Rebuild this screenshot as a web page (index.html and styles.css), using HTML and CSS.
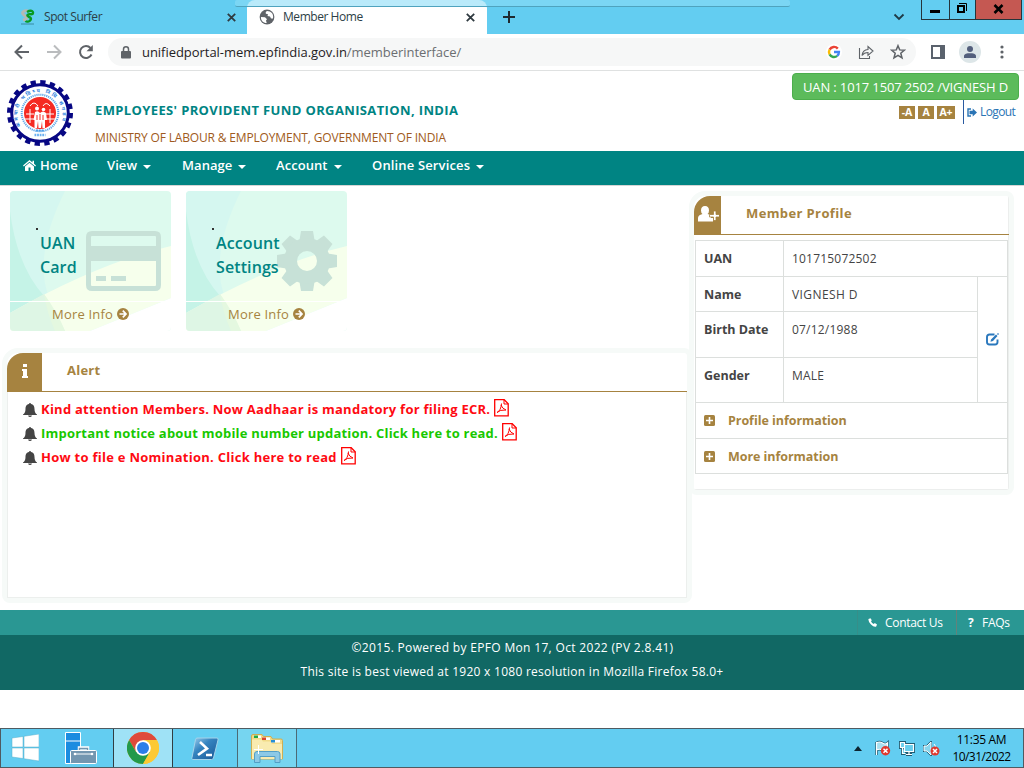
FILE: index.html
```html
<!DOCTYPE html>
<html lang="en">
<head>
<meta charset="utf-8">
<title>Member Home</title>
<link rel="stylesheet" href="styles.css">
</head>
<body>
<div class="tabs">
  <div class="snap-bar"></div>
  <div class="tab">
    <svg class="fav" width="16" height="16" viewBox="0 0 16 16"><path d="M8 2C3 1 1 4 4 6s4 4-1 5" fill="none" stroke="#b4b9b4" stroke-width="3"/><path d="M7 3c5-3 7 0 5.500 2-2 1-4-1-5 1s5 2 3 5c-1 2-4 2-5 1" fill="none" stroke="#079a20" stroke-width="2.400"/><path d="M1 15h13" stroke="#398ba3"/></svg>
    <span class="t-spot">Spot Surfer</span>
    <svg class="x" width="9" height="9" viewBox="0 0 9 9"><path d="M.8.8l7.4 7.4M8.2.8L.8 8.2"/></svg>
  </div>
  <div class="tab active">
    <svg class="fav" width="16" height="16" viewBox="0 0 16 16"><circle cx="8" cy="8" r="7.4" fill="#5f6368"/><path d="M2 8l4 .2 2 2-1 1.3.7 2.6C4 14 1.600 11 2 8zM8 2c-1 .6-1.800 1.700-1 2.700L9 5.300 8.500 7l2.500.4 1 2h2C15 5 12 2 8 2z" fill="#fff"/></svg>
    <span class="t-home">Member Home</span>
    <svg class="x" width="9" height="9" viewBox="0 0 9 9"><path d="M.8.8l7.4 7.4M8.2.8L.8 8.2"/></svg>
  </div>
  <svg class="plus" width="12" height="12" viewBox="0 0 12 12"><path d="M6 0v12M0 6h12" stroke="#1f2a30" stroke-width="2"/></svg>
  <svg class="chev" width="12" height="8" viewBox="0 0 12 8"><path d="M1.500 1.500L6 6l4.500-4.500" fill="none" stroke="#1f3a46" stroke-width="1.800"/></svg>
  <div class="winbtns">
    <span class="wb"><svg width="27" height="19"><path d="M8 10h10v3H8z"/></svg></span>
    <span class="wb"><svg width="25" height="19"><path d="M8 6h6v6H8z" fill="none" stroke="#000" stroke-width="2"/><path d="M9 3.500h7.500V11" fill="none" stroke="#000"/></svg></span>
    <span class="wb close"><svg width="45" height="19"><path d="M18.500 5l8 8M26.500 5l-8 8" stroke="#000" stroke-width="2.600"/></svg></span>
  </div>
</div>
<div class="toolbar">
  <svg class="nav-ic" width="16" height="16" viewBox="0 0 16 16"><path d="M15 8H2M8 1.500L1.500 8 8 14.500" fill="none" stroke="#5f6368" stroke-width="2"/></svg>
  <svg class="nav-ic" width="16" height="16" viewBox="0 0 16 16"><path d="M1 8h13M8 1.500L14.500 8 8 14.500" fill="none" stroke="#babcbe" stroke-width="2"/></svg>
  <svg class="nav-ic" width="16" height="16" viewBox="0 0 16 16"><path d="M13.500 10.500A6 6 0 1 1 12.500 4" fill="none" stroke="#5f6368" stroke-width="2"/><path d="M14.800 1v6.300H8.500z" fill="#5f6368"/></svg>
  <div class="omni">
    <svg width="10" height="13" viewBox="0 0 10 13"><path d="M1 5h8q1 0 1 1v5.500q0 1-1 1H1q-1 0-1-1V6q0-1 1-1z" fill="#5f6368"/><path d="M2.500 5V3.300a2.500 2.500 0 0 1 5 0V5" fill="none" stroke="#5f6368" stroke-width="1.500"/></svg>
    <span class="url">unifiedportal-mem.epfindia.gov.in<i>/memberinterface/</i></span>
    <svg class="g" width="16" height="16" viewBox="0 0 16 16"><circle cx="8" cy="8" r="8" fill="#fff"/><g fill="none" stroke-width="2.400"><path d="M11.800 4.600A5 5 0 0 0 3.600 5.600" stroke="#ea4335"/><path d="M3.600 5.600a5 5 0 0 0 0 4.800" stroke="#fbbc05"/><path d="M3.600 10.400a5 5 0 0 0 7.600 1.500" stroke="#34a853"/><path d="M11.200 11.900A5 5 0 0 0 12.900 8H8" stroke="#4285f4"/></g></svg>
    <svg width="16" height="16" viewBox="0 0 16 16"><path d="M1.500 4v10.500h10V12" fill="none" stroke="#5f6368" stroke-width="1.100"/><path d="M4 11.500C4.500 7.500 6.500 5.700 10 5.500V2.500l5 4.500-5 4.300V8.500c-2.600 0-4.500.8-6 3z" fill="none" stroke="#5f6368" stroke-width="1.100"/></svg>
    <svg width="16" height="16" viewBox="0 0 16 16"><path d="M8 1.700l1.700 4.200 4.700.3-3.600 3 1.200 4.700L8 11.300l-4 2.600 1.200-4.700-3.600-3 4.700-.3z" fill="none" stroke="#5f6368" stroke-width="1.500"/></svg>
  </div>
  <svg class="side" width="14" height="14"><path d="M1 1h12v12H1z" fill="#fff" stroke="#5a626d" stroke-width="2"/><path d="M9 0h5v14H9z" fill="#5a626d"/></svg>
  <svg class="ava" width="22" height="22"><circle cx="11" cy="11" r="11" fill="#dde6e8"/><circle cx="11" cy="8" r="3" fill="#535f7c"/><path d="M5 17v-1.800C5 12.800 8 12.300 11 12.300s6 .5 6 2.900V17z" fill="#535f7c"/></svg>
  <svg class="dots" width="4" height="14" fill="#5f6368"><circle cx="2" cy="2" r="1.600"/><circle cx="2" cy="7" r="1.600"/><circle cx="2" cy="12" r="1.600"/></svg>
</div>
<header class="head">
  <svg class="logo" width="68" height="68" viewBox="0 0 68 68">
    <defs><path id="arcO" d="M14.500 47A22.500 22.500 0 1 1 53.500 47"/></defs>
    <circle cx="34" cy="34" r="31" fill="#fff" stroke="#070783" stroke-width="4" stroke-dasharray="5.300 4.439"/>
    <circle cx="34" cy="34" r="28.300" fill="#fff" stroke="#070783" stroke-width="3"/>
    <circle cx="34" cy="34" r="16" fill="#f52a22"/>
    <circle cx="34" cy="34" r="18.300" fill="none" stroke="#5fa8e8" stroke-width="2" stroke-dasharray="1.200 .8"/>
    <text class="seal"><textPath href="#arcO" textLength="88">कर्मचारी भविष्य निधि संगठन</textPath></text>
    <g stroke="#fff" fill="none"><path d="M20 35h8M40 35h8M19 40h9M40 40h9M24 30v14M44 30v14M24 27q4-6 8 0M37 27q3-5 7 0" stroke-width="1"/></g>
    <path d="M29 33q3-2 5 1 3-3 6 0l1 7h-2v8h-2.500l-.5-7-1 7h-2.500l-.5-7-1 7h-2.500v-8h-1z" fill="#fff"/>
    <path d="M34 35v6M37 36v5M31 36v5" stroke="#f52a22"/>
    <g fill="#fff"><circle cx="31" cy="29.500" r="2"/><circle cx="37.500" cy="30.500" r="1.800"/></g>
    <path d="M30 51.500h8" stroke="#4a9de8" stroke-width="2" stroke-dasharray="2 .8"/>
    <path d="M28.500 56h11" stroke="#6ab0f0" stroke-width="2.400" stroke-dasharray="1.800 .8"/>
  </svg>
  <div class="titles">
    <h1>EMPLOYEES' PROVIDENT FUND ORGANISATION, INDIA</h1>
    <p>MINISTRY OF LABOUR &amp; EMPLOYMENT, GOVERNMENT OF INDIA</p>
  </div>
  <div class="user">
    <div class="uan"><span>UAN : 1017 1507 2502 /VIGNESH D</span></div>
    <div class="tools">
      <b>-A</b><b>A</b><b class="ap">A+</b>
      <a class="logout"><svg width="10" height="9" viewBox="0 0 10 9"><path d="M4 1H1v7h3" fill="none" stroke="#2a74b5" stroke-width="1.400"/><path d="M2.500 2.700h3.200V.5L10 4.500 5.700 8.500V6.300H2.500z" fill="#2a74b5"/></svg><span>Logout</span></a>
    </div>
  </div>
</header>
<nav class="nav">
  <a class="n1"><svg width="13" height="11" viewBox="0 0 13 11"><path d="M6.500 0L0 5.500l.8.900L6.500 1.700l5.700 4.700.8-.9-2-1.700V.8H9.500v1.700z" fill="#fff"/><path d="M6.500 2.700L2 6.500V11h3.500V7.500h2V11H11V6.500z" fill="#fff"/></svg><span>Home</span></a>
  <a class="n2"><span>View</span><i></i></a>
  <a class="n3"><span>Manage</span><i></i></a>
  <a class="n4"><span>Account</span><i></i></a>
  <a class="n5"><span>Online Services</span><i></i></a>
</nav>
<main class="main">
  <section class="left">
    <div class="cards">
      <div class="card">
        <svg class="wave" width="161" height="140"><path d="M0 0h161v140H0z" fill="#ddfaee"/><path d="M0 0h55Q24 62 38 104L0 124z" fill="#d5f7f0"/><path d="M0 20Q7 76 35 106L0 124z" fill="#c5f3e7"/><path d="M161 55Q88 72 0 122V140H80L161 107z" fill="#f6ffec"/><path d="M0 122Q18 112 34 103Q48 125 55 140H0z" fill="#def6e5"/><path d="M34 103Q37 122 45 140h10Q48 122 34 103z" fill="#e4f8e0"/><path d="M161 107v33H80z" fill="#fff"/></svg>
        <div class="card-body"><em></em><h2>UAN<br>Card</h2>
          <svg class="big" width="75" height="60"><path d="M2.500 6q0-3.500 3.500-3.500h63q3.500 0 3.500 3.500v48q0 3.500-3.500 3.500H6q-3.500 0-3.500-3.500z" fill="none" stroke="#c7e1d7" stroke-width="5"/><path d="M0 15h75v15H0zM10 45h10v5H10zM25 45h15v5H25z" fill="#c7e1d7"/></svg></div>
        <div class="more"><span>More Info</span><svg width="12" height="12" viewBox="0 0 12 12"><circle cx="6" cy="6" r="6" fill="#a68340"/><path d="M2.500 6h6M5.800 2.700L9 6 5.800 9.300" fill="none" stroke="#fff" stroke-width="1.700"/></svg></div>
      </div>
      <div class="card">
        <svg class="wave" width="161" height="140"><path d="M0 0h161v140H0z" fill="#ddfaee"/><path d="M0 0h55Q24 62 38 104L0 124z" fill="#d5f7f0"/><path d="M0 20Q7 76 35 106L0 124z" fill="#c5f3e7"/><path d="M161 55Q88 72 0 122V140H80L161 107z" fill="#f6ffec"/><path d="M0 122Q18 112 34 103Q48 125 55 140H0z" fill="#def6e5"/><path d="M34 103Q37 122 45 140h10Q48 122 34 103z" fill="#e4f8e0"/><path d="M161 107v33H80z" fill="#fff"/></svg>
        <div class="card-body"><em></em><h2>Account<br>Settings</h2>
          <svg class="big gear" width="60" height="60" viewBox="-30 -30 60 60"><g fill="#c7e1d7"><path id="tooth" d="M-6 -30h12l2 12h-16zM-6 30h12l2-12h-16zM-30 -6v12l12 2v-16zM30 -6v12l-12 2v-16z"/><use href="#tooth" transform="rotate(45)"/></g><circle r="16.500" fill="none" stroke="#c7e1d7" stroke-width="13"/></svg></div>
        <div class="more"><span>More Info</span><svg width="12" height="12" viewBox="0 0 12 12"><circle cx="6" cy="6" r="6" fill="#a68340"/><path d="M2.500 6h6M5.800 2.700L9 6 5.800 9.300" fill="none" stroke="#fff" stroke-width="1.700"/></svg></div>
      </div>
    </div>
    <div class="panel alert">
      <div class="p-head"><div class="p-ic"><svg width="8" height="14" viewBox="0 0 8 14"><path d="M2 0h4v3H2zM1 5h5v7h1v2H1v-2h1V7H1z" fill="#fff"/></svg></div><h3>Alert</h3></div>
      <ul>
        <li><svg class="bell" width="14" height="14" viewBox="0 0 14 14"><path d="M7 0q1 0 1 1c3 .5 3.500 3 3.500 5 0 3 1 4.500 2.500 5.500v.5H0v-.5C1.500 10.500 2.500 9 2.500 6c0-2 .5-4.500 3.500-5q0-1 1-1zM5 12.500h4q-.5 1.500-2 1.500t-2-1.500z" fill="#444"/></svg><span class="a1">Kind attention Members. Now Aadhaar is mandatory for filing ECR.</span><svg class="pdf" width="15" height="18" viewBox="0 0 15 18"><path d="M.7.700h9.500l4 4v12.100H.7z" fill="#fff" stroke="#f00" stroke-width="1.300"/><path d="M10 .7v4.300h4.300M3 13.500q4-2 4.500-9M3 13.500q3-3 9-2.500Q8 9.500 7 6" fill="none" stroke="#f00"/></svg></li>
        <li class="green"><svg class="bell" width="14" height="14" viewBox="0 0 14 14"><path d="M7 0q1 0 1 1c3 .5 3.500 3 3.500 5 0 3 1 4.500 2.500 5.500v.5H0v-.5C1.500 10.500 2.500 9 2.500 6c0-2 .5-4.500 3.500-5q0-1 1-1zM5 12.500h4q-.5 1.500-2 1.500t-2-1.500z" fill="#444"/></svg><span class="a2">Important notice about mobile number updation. Click here to read.</span><svg class="pdf" width="15" height="18" viewBox="0 0 15 18"><path d="M.7.700h9.500l4 4v12.100H.7z" fill="#fff" stroke="#f00" stroke-width="1.300"/><path d="M10 .7v4.300h4.300M3 13.500q4-2 4.500-9M3 13.500q3-3 9-2.500Q8 9.500 7 6" fill="none" stroke="#f00"/></svg></li>
        <li><svg class="bell" width="14" height="14" viewBox="0 0 14 14"><path d="M7 0q1 0 1 1c3 .5 3.500 3 3.500 5 0 3 1 4.500 2.500 5.500v.5H0v-.5C1.500 10.500 2.500 9 2.500 6c0-2 .5-4.500 3.500-5q0-1 1-1zM5 12.500h4q-.5 1.500-2 1.500t-2-1.500z" fill="#444"/></svg><span class="a3">How to file e Nomination. Click here to read</span><svg class="pdf" width="15" height="18" viewBox="0 0 15 18"><path d="M.7.700h9.500l4 4v12.100H.7z" fill="#fff" stroke="#f00" stroke-width="1.300"/><path d="M10 .7v4.300h4.300M3 13.500q4-2 4.500-9M3 13.500q3-3 9-2.500Q8 9.500 7 6" fill="none" stroke="#f00"/></svg></li>
      </ul>
    </div>
  </section>
  <aside class="panel profile">
    <div class="p-head"><div class="p-ic"><svg width="21" height="16" viewBox="0 0 21 16"><path d="M3 4.500Q3 0 7 0t4 4.500Q11 7 9.500 8q3 .5 3.500 2v2h2v3.500H0V12q0-3 4.500-4Q3 7 3 4.500z" fill="#fff"/><path d="M11.500 8.500h4V5h2.500v3.500h4V11h-4v3.500h-2.500V11h-4z" fill="#fff" stroke="#a68340" stroke-width=".8"/></svg></div><h3>Member Profile</h3></div>
    <div class="table">
      <div class="row r1"><b>UAN</b><span>101715072502</span></div>
      <div class="mid">
        <div class="rows">
          <div class="row r2"><b>Name</b><span class="vn">VIGNESH D</span></div>
          <div class="row r3"><b>Birth Date</b><span>07/12/1988</span></div>
          <div class="row r4"><b>Gender</b><span>MALE</span></div>
        </div>
        <div class="edit"><svg width="13" height="13" viewBox="0 0 13 13"><path d="M8.500 1.500H3.500Q1 1.500 1 4v5q0 2.500 2.500 2.500h5.500q2.500 0 2.500-2.500V6.500" fill="none" stroke="#2a78bd" stroke-width="1.900"/><path d="M4.500 8.800L5 6.500 10 1.500l1.500 1.500L7 8z M11 1l1-1 1 1-1 1z" fill="#2a78bd"/></svg></div>
      </div>
      <div class="info"><svg width="11" height="11"><rect width="11" height="11" rx="1.500" fill="#a68340"/><path d="M5.500 2v7M2 5.500h7" stroke="#fff" stroke-width="1.600"/></svg><span>Profile information</span></div>
      <div class="info last"><svg width="11" height="11"><rect width="11" height="11" rx="1.500" fill="#a68340"/><path d="M5.500 2v7M2 5.500h7" stroke="#fff" stroke-width="1.600"/></svg><span>More information</span></div>
    </div>
  </aside>
</main>
<footer>
  <div class="f-links">
    <a class="contact"><svg width="9" height="9" viewBox="0 0 9 9"><path d="M.5 1L2.500.2l1.300 2L3 3.200q.8 2 2.800 2.800l1-.9L9 6.500 8.200 8.600Q6 9.500 3 6.500T.5 1z" fill="#fff"/></svg><span>Contact Us</span></a>
    <a class="faq"><strong>?</strong><span>FAQs</span></a>
  </div>
  <div class="f-copy"><p><span class="c1">©2015. Powered by EPFO Mon 17, Oct 2022 (PV 2.8.41)</span></p><p><span class="c2">This site is best viewed at 1920 x 1080 resolution in Mozilla Firefox 58.0+</span></p></div>
</footer>
<div class="taskbar">
  <div class="tb start"><svg width="28" height="28" viewBox="0 0 28 28"><path d="M1 4l11-1.500V13H1zM13 2.300L28 0v13H13zM1 14h11v10.500L1 23zM13 14h15v13L13 24.700z" fill="#fff" stroke="#54aeca" stroke-width=".5"/></svg></div>
  <div class="tb srv"><svg width="32" height="33" viewBox="0 0 32 33"><path d="M.5.500h15v31H.5z" fill="#1b8ce0" stroke="#fff"/><path d="M0 9h15" stroke="#fff"/><path d="M14.500 19v-3h8v3" fill="none" stroke="#fff" stroke-width="3.500"/><path d="M14.500 19v-2.500h8V19" fill="none" stroke="#7396b0" stroke-width="1.500"/><rect x="5.500" y="18.500" width="26" height="13" rx="1" fill="#7396b0" stroke="#fff"/><path d="M9 22h19" stroke="#fff"/><circle cx="10" cy="22" r="1.300" fill="#fff"/><circle cx="27" cy="22" r="1.300" fill="#fff"/></svg></div>
  <div class="tb chrome"><svg width="32" height="32" viewBox="-16 -16 32 32"><circle r="16" fill="#fcc934"/><path d="M-13.860 -8A16 16 0 0 1 13.860 -8H0L-6.930 4z" fill="#df4a3c"/><path d="M-13.860 -8A16 16 0 0 0 0 16L6.930 4H-6.930z" fill="#23994b"/><path d="M13.860 -8A16 16 0 0 1 0 16L6.930 4 0 -8z" fill="#fcc934"/><circle r="7.800" fill="#fff"/><circle r="6" fill="#2b7de9"/></svg></div>
  <div class="tb ps"><svg width="28" height="23" viewBox="0 0 28 23"><defs><linearGradient id="pg" x2="1" y2="1"><stop offset="0" stop-color="#9fd0ee"/><stop offset=".4" stop-color="#3584c0"/><stop offset="1" stop-color="#185694"/></linearGradient></defs><path d="M6 1h20q1.500 0 1 2l-4.500 18q-.5 1.500-2 1.500h-19Q.5 22 1 20.500L4.500 2.500Q5 1 6 1z" fill="url(#pg)" stroke="#a5d3ea"/><path d="M9 5l7 6.500L7 18M15 18h6" fill="none" stroke="#fff" stroke-width="2.600"/></svg></div>
  <div class="tb exp"><svg width="34" height="31" viewBox="0 0 34 31"><path d="M1.500 3q0-1.500 1.500-1.500h9l1.500 2H21l1.500 2.500H31q1.500 0 1.500 1.500V26h-31z" fill="#f1da88" stroke="#cfae52"/><path d="M4 2.500h7V5H4z" fill="#fff"/><path d="M4 2.500h4V5H4z" fill="#22a845"/><path d="M12 4.500h8V7h-8z" fill="#fff"/><path d="M12 4.500h4V7h-4z" fill="#d8452f"/><path d="M21 7h9v2.500h-9z" fill="#fff"/><path d="M21 7h4v2.500h-4z" fill="#258fd6"/><path d="M2 6.500h9.500l1.500 2h7.500L22 11h10v15H2z" fill="#f9ebb0"/><path d="M4.500 29.500V21q0-2.500 2.500-2.500h20.500q2.500 0 2.500 2.500v8.500h-5V23.500H10v6z" fill="#8cc9e6" stroke="#529fc6"/><path d="M8.500 12v9M4 16.500h9" stroke="#fff"/></svg></div>
  <div class="tray">
    <svg class="up" width="8" height="5"><path d="M4 0l4 5H0z" fill="#0c2430"/></svg>
    <svg class="flag" width="17" height="16" viewBox="0 0 17 16"><path d="M2.500 2v13M2.500 3q3-2 6 0t5 0v7q-3 1.500-5.500 0t-5.500 0" fill="#c2eaf5" stroke="#215c72" stroke-width="2.600"/><path d="M2.500 2v13M2.500 3q3-2 6 0t5 0v7q-3 1.500-5.500 0t-5.500 0" fill="#a9dfef" stroke="#fff" stroke-width="1.200"/><circle cx="11.500" cy="10.800" r="4.700" fill="#e0392f"/><path d="M9.500 8.800l4 4M13.500 8.800l-4 4" stroke="#fff" stroke-width="1.500"/></svg>
    <svg class="net" width="16" height="15" viewBox="0 0 16 15"><path d="M5.500 3.500h9v7h-9zM7 13.500h6M10 11v2M1.500 1.500h4v5h-4zM3.500 6.500v6h3" fill="none" stroke="#215c72" stroke-width="3"/><path d="M5.500 3.500h9v7h-9zM7 13.500h6M10 11v2M1.500 1.500h4v5h-4zM3.500 6.500v6h3" fill="#68cfee" stroke="#fff" stroke-width="1.200"/></svg>
    <svg class="vol" width="17" height="15" viewBox="0 0 17 15"><path d="M1 5h3l4-4v13l-4-4H1z" fill="#8ad7ee" stroke="#215c72" stroke-width="2"/><path d="M1 5h3l4-4v13l-4-4H1zM11 3q2 2 1.500 4" fill="#8ad7ee" stroke="#fff"/><circle cx="12" cy="10" r="4.500" fill="#e0392f"/><path d="M10 8l4 4M14 8l-4 4" stroke="#fff" stroke-width="1.500"/></svg>
    <div class="clock"><div><span class="k1">11:35 AM</span></div><div><span class="k2">10/31/2022</span></div></div>
  </div>
</div>
</body>
</html>
```
FILE: styles.css
```css
* { box-sizing: border-box; margin: 0; padding: 0; }
body { width: 1024px; height: 768px; overflow: hidden; background: #fff; font-family: "Open Sans", "Noto Sans", sans-serif; font-size: 12px; color: #444; display: flex; flex-direction: column; }
svg { display: block; flex: none; }
span, a, h1, h2, h3 { white-space: nowrap; }

.tabs { height: 34px; background: #63cdf1; display: flex; position: relative; flex: none; color: #2c3e46; }
.snap-bar { position: absolute; left: 235px; top: 0; width: 555px; height: 7px; background: rgba(140,220,246,.6); border-bottom: 1px solid #4fa3be; border-radius: 2px; z-index: 2; }
.tab { width: 247px; display: flex; align-items: center; padding: 0 11px 0 20px; line-height: 34px; }
.tab.active { width: 240px; background: #fff; border-radius: 8px 8px 0 0; padding: 0 12px; }
.t-spot, .t-home { letter-spacing: -.45px; }
.fav { margin-right: 8px; }
.x { margin-left: auto; stroke: #2f3a40; stroke-width: 1.8; }
.plus { margin: 11px 0 0 16px; }
.chev { margin: 13px 0 0 auto; }
.winbtns { display: flex; margin: 0 2px 0 16px; height: 20px; border: 1px solid #25343b; border-top: 0; }
.wb { border-right: 1px solid #25343b; display: block; }
.wb.close { background: #c55852; border-right: 0; }

.toolbar { height: 37px; border-bottom: 1px solid #dfe1e1; display: flex; align-items: center; padding-left: 14px; flex: none; }
.nav-ic { margin-right: 16px; }
.omni { width: 808px; height: 28px; background: #f6f7f7; border-radius: 14px; display: flex; align-items: center; padding-left: 13px; margin-left: -2px; }
.omni svg + svg { margin-left: 16px; }
.url { margin-left: 11px; font-size: 13px; line-height: 28px; color: #1f2123; letter-spacing: -.04px; }
.url i { font-style: normal; color: #6b6e71; }
.g { margin-left: auto; }
.omni svg:last-child { margin-right: 10px; }
.side { margin-left: 15px; }
.ava { margin-left: 14px; }
.dots { margin-left: 19px; }

.head { height: 80px; display: flex; flex: none; }
.logo { margin: 8px 0 0 6px; }
.seal { font: bold 5px "Noto Sans", sans-serif; fill: #2a80dd; }
.titles { margin: 29px 0 0 21px; }
.titles h1 { font-size: 13px; line-height: 20px; color: #008483; letter-spacing: .37px; }
.titles p { font-size: 12px; line-height: 20px; margin-top: 8px; color: #a05a20; white-space: nowrap; letter-spacing: -.16px; }
.user { margin: 2px 5px 0 auto; width: 227px; }
.uan { height: 27px; background: #5cbb5b; border: 1px solid #4cae4c; border-radius: 4px; color: #fff; font-size: 13px; line-height: 27px; padding-left: 10px; letter-spacing: -.13px; }
.tools { display: flex; justify-content: flex-end; align-items: center; padding-right: 4px; height: 24px; }
.tools b { background: #a68340; color: #fff; width: 16px; height: 13px; margin-right: 3px; text-align: center; font-size: 10.5px; line-height: 13px; }
.tools b.ap { width: 18px; margin-right: 8px; }
.logout { display: flex; align-items: center; height: 24px; border-left: 1px solid #2a5aa0; padding-left: 3px; color: #2a74b5; line-height: 24px; }
.logout span { margin-left: 3px; width: 35px; letter-spacing: -.6px; }

.nav { height: 35px; background: #008483; border-bottom: 1px solid #d5d5d5; display: flex; color: #fff; font-weight: 600; font-size: 13px; line-height: 29px; padding-left: 23px; flex: none; }
.nav a { display: flex; }
.nav svg { margin: 9px 4px 0 0; }
.nav i { border: 4px solid transparent; border-top-color: #fff; margin: 14px 0 0 6px; height: 4px; border-bottom: 0; }
.nav span { letter-spacing: .06px; }
.n5 span { letter-spacing: .15px; }
.n1 { width: 84px; } .n2 { width: 75px; } .n3 { width: 94px; } .n4 { width: 96px; }

.main { height: 424px; display: flex; flex: none; }
.left { width: 689px; padding: 5px 0 0 2px; }
.cards { display: flex; gap: 15px; padding-left: 8px; height: 157px; }
.card { width: 161px; height: 140px; border-radius: 4px; overflow: hidden; position: relative; z-index: 0; }
.wave { position: absolute; left: 0; top: 0; z-index: -1; }
.card-body { height: 111px; border-bottom: 1px solid #fff; position: relative; padding: 40px 0 0 30px; }
.card-body em { position: absolute; left: 26px; top: 37px; width: 2px; height: 2px; background: #333; }
.card h2 { font-size: 16px; line-height: 24px; font-weight: 600; color: #008483; position: relative; z-index: 1; letter-spacing: .1px; }
.big { position: absolute; left: 76px; top: 40px; }
.gear { left: 91px; }
.more { display: flex; height: 28px; align-items: center; padding-left: 42px; color: #a68340; font-size: 13px; line-height: 26px; }
.more svg { margin-left: 4px; margin-top: -4px; }
.more span { margin-top: -5px; letter-spacing: .2px; }

.panel { border: 5px solid #f6faf8; border-radius: 8px; }
.alert { width: 690px; height: 255px; border-top-left-radius: 16px; }
.p-head { height: 39px; display: flex; border-bottom: 1px solid #a68340; }
.p-ic { width: 35px; height: 39px; background: #a68340; border-top-left-radius: 16px; display: flex; align-items: center; justify-content: center; }
.p-head h3 { font-size: 13px; line-height: 34px; color: #a68340; margin-left: 25px; letter-spacing: .25px; }
.alert .p-ic svg { margin-top: -3px; }
.alert ul { list-style: none; height: 206px; border: 1px solid #ecefed; border-top: 0; padding: 6px 0 0 15px; }
.alert li { display: flex; height: 24px; align-items: center; color: #ff0a12; font-weight: bold; font-size: 13px; }
.alert li.green { color: #18c800; }
.alert li span { margin-top: -2px; }
.a1 { letter-spacing: .25px; } .a2 { letter-spacing: .21px; } .a3 { letter-spacing: .27px; }
.bell { margin: -1px 4px 0 0; }
.pdf { margin: -4px 0 0 4px; }

.profile { width: 325px; height: 304px; margin-top: 5px; border-top-left-radius: 16px; background: linear-gradient(#eceeed,#eceeed) bottom/100% 1px no-repeat, linear-gradient(#eceeed,#eceeed) right/1px 100% no-repeat; background-origin: padding-box; }
.profile .p-ic { width: 27px; }
.profile .p-ic svg { margin: -3px -1px 0 0; }
.profile .p-head h3 { line-height: 35px; letter-spacing: .38px; }
.table { margin: 5px 1px 0 1px; border: 1px solid #dcdfdd; width: 313px; }
.row { display: flex; border-bottom: 1px solid #dcdfdd; }
.row b { width: 88px; padding-left: 8px; border-right: 1px solid #dcdfdd; font-size: 12.5px; }
.row span { padding-left: 8px; font-size: 12px; letter-spacing: .2px; }
.row .vn { letter-spacing: .42px; }
.r1 { height: 36px; line-height: 35px; }
.mid { display: flex; height: 126px; border-bottom: 1px solid #dcdfdd; }
.rows { width: 282px; border-right: 1px solid #dcdfdd; }
.r2 { height: 35px; line-height: 35px; }
.r3 { height: 46px; line-height: 35px; }
.r4 { height: 44px; line-height: 36px; border: 0; }
.edit { padding: 56px 0 0 8px; }
.info { display: flex; align-items: center; height: 36px; border-bottom: 1px solid #dcdfdd; padding-left: 8px; color: #a68340; font-weight: bold; font-size: 12.5px; }
.info span { margin-left: 13px; letter-spacing: -.05px; }
.info.last { height: 34px; border: 0; }

footer { color: #fff; flex: none; height: 118px; }
.f-links { height: 25px; background: #2a9793; display: flex; justify-content: flex-end; line-height: 25px; }
.f-links a { display: flex; align-items: center; border-left: 1px solid #63827b; }
.f-links .contact { width: 99px; padding-left: 10px; border-left-color: #368e89; }
.contact span { margin-left: 8px; letter-spacing: -.3px; }
.faq { width: 68px; padding-left: 11px; }
.faq strong { width: 14px; }
.faq span { letter-spacing: -.25px; }
.f-copy { height: 55px; background: #116864; text-align: center; line-height: 24px; padding-top: 1px; }
.c1 { letter-spacing: .33px; margin-left: 1px; } .c2 { letter-spacing: .27px; }

.taskbar { height: 40px; background: #63cdf1; border: 1px solid #4f5b61; display: flex; flex: none; color: #000; }
.tb { height: 38px; display: flex; align-items: center; justify-content: center; }
.start { width: 47px; } .srv { width: 65px; }
.chrome { width: 60px; background: #9fe2f6; border: solid #313d42; border-width: 0 1px; }
.ps { width: 64px; }
.exp { width: 60px; background: #76d5f0; border: solid #4c6a75; border-width: 0 1px; }
.tray { margin-left: auto; display: flex; align-items: center; }
.up { margin-left: 1px; }
.flag { margin-left: 12px; } .net { margin-left: 8px; } .vol { margin-left: 8px; }
.clock { width: 83px; text-align: center; line-height: 17px; font-size: 12px; }
.k1 { letter-spacing: -.35px; } .k2 { letter-spacing: -.55px; }
```
